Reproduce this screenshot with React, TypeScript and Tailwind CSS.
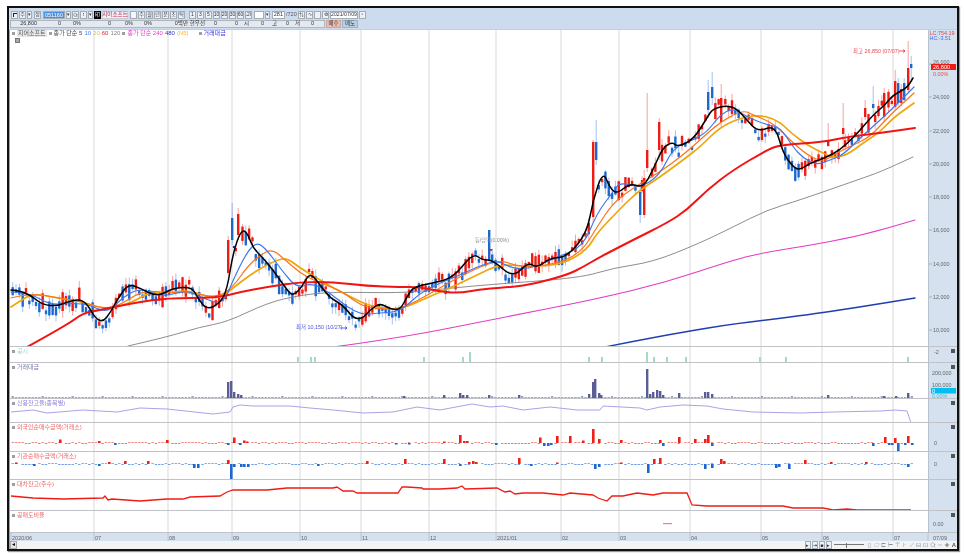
import { Minus, Plus, Search } from "lucide-react";
import type { ReactNode } from "react";

type Pt = [number, number];
// [x, body top, body bottom, wick top, wick bottom, up]
type Candle = [number, number, number, number, number, boolean];

const GRID = [94, 168, 232, 300, 361, 429, 496, 561, 619, 690, 761, 822, 893];
const MONTHS: [number, string][] = [
  [11, "2020/06"], [94, "07"], [168, "08"], [232, "09"], [300, "10"], [361, "11"], [429, "12"],
  [496, "2021/01"], [561, "02"], [619, "03"], [690, "04"], [761, "05"], [822, "06"], [893, "07"],
];

const BLACK: Pt[] = [
  [11, 290], [20, 291], [30, 295], [43, 305], [57, 306], [67, 302], [80, 299], [88, 305], [95, 318], [103, 322],
  [110, 313], [117, 300], [128, 284], [140, 288], [157, 297], [173, 288], [192, 287], [197, 297], [207, 310], [220, 303],
  [227, 290], [233, 253], [241, 230], [247, 232], [253, 248], [263, 258], [273, 270], [287, 290], [293, 296], [302, 287],
  [310, 272], [320, 285], [330, 298], [343, 305], [353, 318], [362, 319], [370, 310], [380, 303], [390, 309], [400, 310],
  [407, 297], [413, 287], [433, 283], [453, 278], [473, 253], [482, 260], [493, 260], [513, 278], [528, 262], [537, 268],
  [550, 258], [567, 257], [587, 233], [593, 200], [603, 171], [610, 188], [617, 194], [630, 183], [643, 188], [653, 170],
  [663, 147], [673, 142], [677, 147], [693, 140], [707, 118], [713, 108], [733, 105], [747, 120], [758, 132], [775, 125],
  [783, 153], [793, 167], [800, 170], [810, 163], [825, 158], [840, 150], [855, 136], [873, 115], [885, 105], [893, 95], [907, 88], [913, 78],
];
const BLUE: Pt[] = [
  [11, 292], [30, 293], [50, 305], [73, 303], [90, 305], [107, 313], [123, 297], [140, 288], [163, 297], [187, 290],
  [200, 297], [223, 305], [233, 280], [247, 252], [257, 242], [267, 250], [283, 272], [297, 288], [313, 283], [330, 293],
  [347, 307], [363, 315], [377, 313], [400, 312], [420, 293], [440, 283], [460, 275], [477, 267], [497, 260], [513, 269],
  [533, 268], [557, 257], [583, 247], [597, 213], [613, 192], [620, 182], [640, 188], [660, 175], [673, 148], [693, 140],
  [707, 132], [720, 115], [733, 108], [747, 117], [767, 125], [780, 127], [793, 147], [803, 158], [817, 165], [830, 160],
  [843, 155], [860, 138], [877, 123], [893, 108], [914, 87],
];
const ORANGE: Pt[] = [
  [11, 298], [30, 293], [60, 298], [87, 303], [100, 308], [117, 307], [143, 290], [167, 293], [190, 292], [217, 298],
  [233, 287], [247, 267], [260, 255], [272, 249], [283, 258], [300, 273], [317, 282], [340, 290], [353, 300], [367, 308],
  [400, 310], [433, 292], [450, 282], [477, 268], [500, 260], [517, 266], [533, 267], [563, 262], [583, 250], [597, 227],
  [613, 203], [633, 188], [660, 172], [683, 155], [700, 140], [720, 122], [743, 110], [753, 115], [773, 123], [790, 140],
  [807, 155], [823, 162], [833, 155], [853, 145], [870, 137], [890, 115], [914, 93],
];
const AMBER: Pt[] = [
  [11, 307], [20, 301], [30, 295], [43, 295], [57, 298], [83, 302], [97, 307], [110, 309], [133, 302], [150, 292],
  [167, 293], [190, 290], [207, 297], [220, 298], [233, 288], [250, 275], [263, 267], [277, 260], [287, 258], [300, 268],
  [317, 278], [333, 288], [353, 298], [367, 305], [383, 308], [400, 310], [433, 295], [450, 288], [477, 275], [500, 264],
  [533, 267], [563, 264], [587, 250], [597, 233], [617, 212], [637, 192], [660, 177], [683, 160], [700, 147], [720, 127],
  [743, 117], [763, 115], [780, 122], [790, 132], [807, 145], [823, 153], [833, 158], [847, 155], [863, 143], [880, 132],
  [893, 118], [914, 103],
];
const RED: Pt[] = [
  [27, 347], [67, 325], [83, 313], [100, 310], [133, 303], [167, 298], [217, 298], [240, 292], [267, 287], [300, 282],
  [333, 282], [367, 286], [400, 287], [420, 287], [443, 292], [460, 293], [483, 289], [513, 287], [533, 284], [567, 275],
  [583, 267], [600, 257], [633, 240], [667, 223], [687, 210], [707, 190], [733, 170], [767, 150], [780, 145], [823, 142],
  [847, 137], [880, 133], [915, 128],
];
const GREY: Pt[] = [
  [128, 346], [167, 337], [200, 327], [227, 322], [267, 303], [300, 295], [333, 292], [400, 293], [433, 290], [483, 285],
  [580, 278], [613, 268], [653, 262], [700, 243], [733, 227], [767, 210], [800, 200], [860, 179], [880, 172], [913, 157],
];
const PINK: Pt[] = [[333, 347], [400, 338], [500, 318], [597, 299], [667, 282], [733, 260], [767, 252], [800, 247], [860, 236], [915, 220]];
const NAVY: Pt[] = [[605, 347], [700, 328], [800, 316], [860, 307], [915, 298]];
const CREDIT: Pt[] = [
  [11, 412], [33, 410], [47, 413], [83, 410], [117, 412], [140, 408], [167, 409], [213, 414], [230, 412], [233, 407],
  [240, 405], [253, 406], [290, 406], [310, 408], [333, 410], [363, 413], [393, 412], [417, 407], [440, 410], [472, 404],
  [490, 407], [503, 406], [523, 410], [550, 407], [577, 410], [600, 410], [603, 406], [640, 408], [647, 410], [660, 407],
  [683, 405], [707, 406], [723, 409], [753, 412], [800, 413], [833, 412], [880, 411], [895, 410], [907, 411], [911, 423],
];
const LOAN: Pt[] = [
  [11, 496], [33, 498], [63, 499], [103, 498], [105, 496], [108, 500], [112, 499], [140, 501], [167, 499], [183, 499],
  [190, 497], [220, 496], [227, 492], [233, 490], [267, 490], [287, 488], [333, 488], [337, 487], [343, 491], [353, 491],
  [357, 493], [398, 493], [402, 487], [407, 487], [422, 488], [423, 489], [440, 489], [457, 488], [462, 486], [465, 489],
  [497, 488], [505, 492], [510, 491], [515, 494], [523, 493], [543, 493], [563, 495], [570, 493], [593, 495], [598, 498],
  [607, 501], [612, 496], [623, 496], [637, 493], [653, 495], [663, 493], [687, 493], [692, 505], [707, 506], [783, 506],
  [793, 508], [823, 508], [833, 510], [847, 509], [857, 510], [911, 510],
];

const CANDLES: Candle[] = [
  [227, 240, 273, 236, 275, true], [231, 218, 240, 203, 245, false], [237, 214, 235, 208, 240, true],
  [488, 230, 260, 230, 262, false], [592, 142, 217, 140, 222, true], [595, 142, 160, 120, 165, false],
  [639, 192, 215, 185, 223, false], [643, 178, 215, 170, 218, true], [646, 150, 168, 93, 172, true],
  [658, 122, 150, 118, 160, true], [707, 92, 110, 80, 118, false], [711, 87, 98, 72, 105, false],
  [720, 98, 122, 84, 128, true], [864, 108, 117, 100, 120, true], [872, 104, 108, 86, 115, false],
  [883, 93, 117, 88, 122, true], [894, 81, 107, 70, 110, true], [897, 83, 103, 78, 106, false],
  [900, 89, 103, 84, 106, true], [903, 83, 100, 78, 102, false], [907, 68, 90, 41, 92, true],
  [910, 64, 68, 56, 80, false], [842, 128, 134, 103, 150, true], [827, 140, 146, 123, 147, true],
];

const NOTICES: [number, number][] = [
  [297, 5], [310, 5], [314, 5], [423, 5], [462, 5], [469, 10], [588, 5], [601, 5], [646, 10], [653, 5], [666, 5],
  [685, 5], [759, 5], [785, 5], [907, 5],
];
const VOLUMES: Pt[] = [
  [227, 382], [230, 381], [233, 392], [237, 394], [240, 395], [403, 396], [443, 395], [459, 393], [462, 395], [466, 395],
  [488, 395], [518, 395], [592, 382], [594, 379], [588, 394], [598, 393], [600, 395], [646, 369], [649, 394], [652, 392],
  [656, 390], [659, 391], [662, 395], [678, 393], [704, 392], [707, 392], [711, 394], [827, 395], [883, 396], [895, 396], [907, 393],
];
// [x, height], positive rises above the zero line
const FOREIGN: Pt[] = [
  [59, 3.5], [98, 2], [166, 3], [233, 5.5], [243, 2.5], [246, 1.5], [114, -2], [227, -2], [239, -2], [459, 8], [463, 2], [466, 2],
  [539, 5.5], [443, 1.5], [395, -1.5], [408, -1.5], [495, -2], [543, -3], [547, -3], [550, -2], [556, 7], [569, 7], [592, 14],
  [598, 4], [582, 2.5], [678, 6], [694, 4], [704, 4], [707, 8], [659, 3], [620, 3], [662, -3], [711, -3], [884, 6], [894, 5],
  [907, 7], [872, -3], [888, -2], [891, -2], [897, -8], [904, -2], [911, -2],
];
const INSTITUTION: Pt[] = [
  [15, 1.5], [108, 2], [124, 3], [147, 3], [227, 4], [366, 3], [404, 5], [443, 5], [518, 6], [468, 2], [472, 3], [475, 2], [653, 5],
  [659, 6], [720, 5], [723, 3], [620, 1.5], [556, 1.5], [804, 4], [830, 2], [865, 2], [230, -15], [193, -4], [197, -4], [233, -3],
  [240, -3], [243, -3], [247, -3], [33, -2], [98, -2], [317, -2], [459, -2], [530, -2], [594, -5], [598, -3], [647, -9], [704, -5],
  [711, -4], [775, -4], [778, -3], [788, -5], [907, -3],
];

function yAt(pts: Pt[], x: number) {
  if (x <= pts[0][0]) return pts[0][1];
  for (let i = 1; i < pts.length; i++) {
    if (x <= pts[i][0]) {
      const [x0, y0] = pts[i - 1];
      const [x1, y1] = pts[i];
      return y0 + ((y1 - y0) * (x - x0)) / (x1 - x0);
    }
  }
  return pts[pts.length - 1][1];
}

function rng(seed: number) {
  let s = seed;
  return () => {
    s = (s * 1664525 + 1013904223) % 4294967296;
    return s / 4294967296;
  };
}

function makeCandles(): Candle[] {
  const r = rng(77);
  const out: Candle[] = [];
  for (let x = 11.5; x < 912; x += 3.33) {
    if (CANDLES.some((c) => Math.abs(c[0] - x) < 1.7)) continue;
    const rising = yAt(BLACK, x + 3) < yAt(BLACK, x - 3);
    const up = r() < 0.22 ? !rising : rising;
    const c = yAt(BLACK, x) + (r() - 0.45) * 10 + (up ? -1 : 3);
    const half = 1.5 + r() * r() * 9;
    out.push([x, c - half, c + half, c - half - r() * 7, c + half + r() * 7, up]);
  }
  return [...out, ...CANDLES];
}

const candles = makeCandles();

const toPoints = (pts: Pt[]) => pts.map(([x, y]) => `${x},${y.toFixed(1)}`).join(" ");

// rounds the corners of a hand-read line: quadratic through segment midpoints
function smooth(pts: Pt[]) {
  let d = `M${pts[0][0]} ${pts[0][1]}`;
  for (let i = 1; i < pts.length - 1; i++) {
    const mx = (pts[i][0] + pts[i + 1][0]) / 2;
    const my = (pts[i][1] + pts[i + 1][1]) / 2;
    d += `Q${pts[i][0]} ${pts[i][1]} ${mx} ${my}`;
  }
  const last = pts[pts.length - 1];
  return `${d}L${last[0]} ${last[1]}`;
}

function Grid({ top, h }: { top: number; h: number }) {
  return (
    <>
      {GRID.map((x) => (
        <line key={x} x1={x} x2={x} y1={top} y2={top + h} stroke="#e0e0e0" strokeWidth={1.2} />
      ))}
    </>
  );
}

function PanelLabel({ children, color }: { children: ReactNode; color: string }) {
  return (
    <div className={`absolute left-[2px] top-[1px] flex items-center gap-[2px] text-[6px] leading-[7px] ${color}`}>
      <span className="h-[3px] w-[3px] bg-[#9aa0a8]" />
      {children}
    </div>
  );
}

function AxisText({ y, x = 3, children, fill = "#666" }: { y: number; x?: number; children: ReactNode; fill?: string }) {
  return (
    <text x={x} y={y} fontSize={5.4} fill={fill}>
      {children}
    </text>
  );
}

// one chart pane: plot on the left, value axis on the right
function Pane({
  top,
  h,
  label,
  axis,
  children,
  handle = true,
}: {
  top: number;
  h: number;
  label?: ReactNode;
  axis?: ReactNode;
  children?: ReactNode;
  handle?: boolean;
}) {
  return (
    <div className="flex border-b border-[#bfc3c7]" style={{ height: h }}>
      <div className="relative w-[918px] bg-white">
        <svg className="block h-full w-full" viewBox={`10 ${top} 918 ${h - 1}`}>
          <Grid top={top} h={h} />
          {children}
        </svg>
        {label}
      </div>
      <div className="w-[29px] border-l border-[#b7c2cf] bg-[#d5e1ef]">
        <svg className="block h-full w-full" viewBox={`0 ${top} 28 ${h - 1}`}>
          {handle && <rect x={22} y={top + 2} width={4} height={4} fill="#555" />}
          {axis}
        </svg>
      </div>
    </div>
  );
}

function Bars({ data, base }: { data: Pt[]; base: number }) {
  const r = rng(base);
  const taken = new Set(data.map(([x]) => Math.round(x / 3.33)));
  const ticks: Pt[] = [];
  for (let x = 11.5; x < 912; x += 3.33) {
    if (!taken.has(Math.round(x / 3.33))) ticks.push([x, r() < 0.5 ? 1 : -1]);
  }
  return (
    <>
      {ticks.map(([x, v]) => (
        <rect key={x} x={x} y={v > 0 ? base - v : base} width={2.4} height={1} fill={v > 0 ? "#f48a84" : "#6f9fe8"} />
      ))}
      {data.map(([x, v]) => (
        <rect key={x} x={x} y={v > 0 ? base - v : base} width={2.6} height={Math.abs(v)} fill={v > 0 ? "#ee2018" : "#1f66d0"} />
      ))}
    </>
  );
}

function MainChart() {
  return (
    <>
      {candles.map(([x, t, b, wt, wb, up], i) => (
        <g key={i} fill={up ? "#ee1c14" : "#1d68cf"}>
          <rect x={x + 0.7} y={wt} width={1} height={wb - wt} opacity={0.4} />
          <rect x={x} y={t} width={2.4} height={Math.max(b - t, 1)} />
        </g>
      ))}
      <g fill="none" strokeLinejoin="round" strokeLinecap="round">
        <path d={smooth(NAVY)} stroke="#1f3fb0" strokeWidth={1.4} />
        <path d={smooth(PINK)} stroke="#e23cc4" strokeWidth={1.1} />
        <path d={smooth(GREY)} stroke="#808080" strokeWidth={0.9} />
        <path d={smooth(AMBER)} stroke="#f0a50a" strokeWidth={1.7} />
        <path d={smooth(ORANGE)} stroke="#f9751a" strokeWidth={1.2} />
        <path d={smooth(BLUE)} stroke="#3f78ee" strokeWidth={1.2} />
        <path d={smooth(RED)} stroke="#f01414" strokeWidth={2} />
        <path d={smooth(BLACK)} stroke="#000" strokeWidth={1.5} />
      </g>
      <text x={853} y={53} fontSize={5.4} fill="#ee4a5a">최고 26,850 (07/07)</text>
      <path d="M899 51h6M903 49.5l2 1.5-2 1.5" fill="none" stroke="#e81818" strokeWidth={0.7} />
      <text x={296} y={329} fontSize={5.4} fill="#4a55e0">최저 10,150 (10/27)</text>
      <path d="M340 328h7M345 326.5l2 1.5-2 1.5" fill="none" stroke="#2030e0" strokeWidth={0.7} />
      <text x={475} y={242} fontSize={5.2} fill="#8a8a8a">등/답락(0.00%)</text>
      <path d="M489 249h4l-2 2.5z" fill="#e81818" />
      <circle cx={234} cy={247} r={1.3} fill="#1020d0" />
    </>
  );
}

function Tool({ children, w = "w-[7px]", className = "" }: { children?: ReactNode; w?: string; className?: string }) {
  return (
    <span className={`flex h-[8px] ${w} shrink-0 items-center justify-center overflow-hidden whitespace-nowrap border border-[#a3adb8] bg-[#eef2f7] text-[5px] leading-none text-[#333] ${className}`}>
      {children}
    </span>
  );
}

function Caret() {
  return <Tool w="w-[5px]">▾</Tool>;
}

function Toolbar() {
  return (
    <div className="h-[22px] border-b border-[#c9ccd0] bg-[#ccdcee]">
      <div className="flex h-[11px] items-center gap-[1px] pl-[2px] pt-[2px]">
        <Tool className="border-[#555]">
          <span className="h-[4px] w-[4px] border-l border-t border-[#222]" />
        </Tool>
        <Tool>주</Tool>
        <Caret />
        <Tool className="ml-[1px]">정</Tool>
        <span className="ml-[1px] flex h-[8px] w-[22px] items-center border border-[#a3adb8] bg-white">
          <span className="bg-[#4f90dc] px-[1px] text-[5.5px] leading-[6px] text-white">051160</span>
        </span>
        <Caret />
        <Tool>
          <Search size={6} strokeWidth={2} />
        </Tool>
        <Tool>↕</Tool>
        <Caret />
        <span className="flex h-[8px] w-[7px] items-center justify-center bg-black text-[5px] text-white">印</span>
        <span className="flex h-[8px] w-[26px] items-center justify-center whitespace-nowrap border border-[#c9cdd2] bg-[#f0f2f5] text-[5.6px] leading-none text-[#c0285c]">지어소프트</span>
        <Tool className="ml-[1px] bg-[#4f90dc] text-white">일</Tool>
        {["주", "월", "년", "분", "초", "틱"].map((t) => (
          <Tool key={t}>{t}</Tool>
        ))}
        <span className="w-[2px]" />
        {["1", "3", "5", "10", "20", "30", "60", "120"].map((t) => (
          <Tool key={t} className="text-[#9aa3ad]">{t}</Tool>
        ))}
        <span className="ml-[1px] h-[8px] w-[10px] border border-[#a3adb8] bg-white" />
        <Caret />
        <span className="ml-[1px] flex h-[8px] w-[13px] items-center justify-end border border-[#a3adb8] bg-white pr-[1px] text-[5.5px] leading-none text-[#333]">281</span>
        <span className="w-[11px] text-[5.5px] leading-none text-[#555]">/720</span>
        <Tool>⇅</Tool>
        <Tool>∿</Tool>
        <Tool className="bg-[#7a828c]" />
        <Tool>⚙</Tool>
        <span className="flex h-[8px] w-[28px] items-center justify-center whitespace-nowrap border border-[#a3adb8] bg-white text-[5.2px] leading-none text-[#333]">2021/07/09</span>
        <Tool>▫</Tool>
      </div>
      <div className="flex h-[10px] items-center pl-[1px]">
        <div className="flex h-[8px] w-[315px] items-center border border-[#aeb7c1] bg-[#e4e9f0] text-[5.5px] leading-none text-[#333]">
          <span className="w-[26px] text-right">26,800</span>
          <span className="w-[24px] text-right">0</span>
          <span className="w-[20px] text-right">0%</span>
          <span className="w-[30px] text-right">0</span>
          <span className="w-[22px] text-right">0%</span>
          <span className="w-[19px] text-right">0%</span>
          <span className="w-[36px] text-right">0백만</span>
          <span className="w-[17px] whitespace-nowrap text-right">현우선</span>
          <span className="w-[12px] text-right">0</span>
          <span className="w-[21px] text-right">0</span>
          <span className="w-[11px] text-right">시</span>
          <span className="w-[15px] text-right">0</span>
          <span className="w-[13px] text-right">고</span>
          <span className="w-[12px] text-right">0</span>
          <span className="w-[11px] text-right">저</span>
          <span className="w-[14px] text-right">0</span>
        </div>
        <span className="ml-[1px] flex h-[8px] w-[15px] items-center justify-center border border-[#c9a79e] bg-[#ecbcb0] text-[5.5px] leading-none text-[#333]">매수</span>
        <span className="ml-[1px] flex h-[8px] w-[16px] items-center justify-center border border-[#9cb3c9] bg-[#b9cfe3] text-[5.5px] leading-none text-[#333]">매도</span>
      </div>
    </div>
  );
}

function Legend() {
  return (
    <div className="absolute left-[2px] top-0 text-[6px] leading-[7px]">
      <div className="flex items-center gap-[2px] whitespace-nowrap text-[#444]">
        <span className="h-[3px] w-[3px] bg-[#9aa0a8]" />
        <span className="bg-[#e8e8e8] px-[1px] text-[#555]">지어소프트</span>
        <span className="h-[3px] w-[3px] bg-[#9aa0a8]" />
        <span>종가 단순 5</span>
        <span className="text-[#4c7ff0]">10</span>
        <span className="text-[#f2b63c]">20</span>
        <span className="text-[#ee2020]">60</span>
        <span className="text-[#888]">120</span>
        <span className="h-[3px] w-[3px] bg-[#9aa0a8]" />
        <span className="text-[#e040c0]">종가 단순 240</span>
        <span className="text-[#3030c0]">480</span>
        <span className="text-[#f2b63c]">(N5)</span>
        <span className="ml-[8px] h-[3px] w-[3px] bg-[#9aa0a8]" />
        <span className="text-[#3838e0]">거래대금</span>
      </div>
      <div className="ml-[3px] mt-[1px] h-[5px] w-[5px] border border-[#777] bg-[#aaa]" />
    </div>
  );
}

function ScrollBar() {
  const icons = ["▯", "▱", "⊏", "⊢", "⊤", "⊦", "⟋", "⊟", "⊡"];
  return (
    <div className="flex h-[8px] items-center bg-[#f1f3f5] text-[5.5px] leading-none text-[#555]">
      <span className="flex h-[8px] w-[7px] items-center justify-center border border-[#aaa] bg-[#e4e4e4] text-[#111]">◂</span>
      <span className="flex-1" />
      <div className="flex h-[8px] items-center gap-[1px] text-[#222]">
        <Tool w="w-[6px]">▸</Tool>
        <Tool w="w-[6px]">⇥</Tool>
        <Tool w="w-[6px]">■</Tool>
        <Tool w="w-[6px]">▸</Tool>
      </div>
      <div className="ml-[2px] flex w-[30px] items-center">
        <span className="h-[3px] w-[12px] border-t border-[#777]" />
        <span className="h-[5px] w-[1px] bg-[#777]" />
        <span className="h-[3px] w-[17px] border-t border-[#777]" />
      </div>
      <div className="ml-[3px] flex items-center gap-[1px] text-[#8a8f96]">
        {icons.map((t, i) => (
          <span key={i} className="w-[6px] text-center text-[6px]">{t}</span>
        ))}
        <Search size={6} />
        <Minus size={6} />
        <Plus size={6} strokeWidth={3} className="text-[#555]" />
        <span className="ml-[1px] mr-[1px] text-[6px] font-bold text-[#555]">A</span>
      </div>
    </div>
  );
}

export default function App() {
  return (
    <div className="h-[558px] w-[966px] overflow-hidden bg-white pl-[7px] pt-[6px] font-['Liberation_Sans','Noto_Sans_CJK_KR',sans-serif] blur-[0.35px]">
      <div className="h-[545px] w-[952px] border-2 border-[#111] bg-[#ccdcee] shadow-[1px_1px_1px_#999]">
        <Toolbar />
        <div className="border-l border-[#9da3aa]">
          <Pane
            top={30}
            h={317}
            handle={false}
            label={<Legend />}
            axis={
              <>
                <AxisText x={0.5} y={34.5} fill="#e04040">LC:754.19</AxisText>
                <AxisText x={0.5} y={40} fill="#3c70e0">HC:-3.51</AxisText>
                {[[26, 64], [24, 97], [22, 131], [20, 164], [18, 197], [16, 230], [14, 264], [12, 297], [10, 330]].map(([v, y]) => (
                  <g key={v}>
                    <line x1={0} x2={3} y1={y} y2={y} stroke="#8a929c" strokeWidth={0.6} />
                    <AxisText x={4} y={v === 26 ? 63.5 : y + 2}>{v},000</AxisText>
                  </g>
                ))}
                <rect x={2} y={64} width={25} height={6} fill="#ee1c14" />
                <text x={4} y={69.2} fontSize={5.6} fill="#fff">26,800</text>
                <AxisText x={4} y={75.5} fill="#ee4a4a">0.00%</AxisText>
              </>
            }
          >
            <MainChart />
          </Pane>
          <Pane
            top={347}
            h={16}
            label={<PanelLabel color="text-[#9fd8c0]">공시</PanelLabel>}
            axis={<AxisText x={5} y={354}>-2</AxisText>}
          >
            {NOTICES.map(([x, v]) => (
              <rect key={x} x={x} y={362 - v} width={2} height={v} fill="#a3dcc4" />
            ))}
          </Pane>
          <Pane
            top={363}
            h={36}
            label={<PanelLabel color="text-[#7c7ca8]">거래대금</PanelLabel>}
            axis={
              <>
                <AxisText y={375}>200,000</AxisText>
                <AxisText y={387}>100,000</AxisText>
                <rect x={2} y={388} width={25} height={5.5} fill="#00bdf2" />
                <text x={3} y={393} fontSize={5.6} fill="#fff">0</text>
                <AxisText y={398} fill="#35bde8">0.00%</AxisText>
              </>
            }
          >
            {Array.from({ length: 271 }, (_, i) => 11.5 + i * 3.33).map((x, i) => (
              <rect key={x} x={x} y={i % 9 === 0 ? 396 : 397} width={2.4} height={i % 9 === 0 ? 2 : 1} fill="#a4a4c4" />
            ))}
            {VOLUMES.map(([x, y]) => (
              <rect key={x} x={x} y={y} width={2.4} height={398 - y} fill="#5c5c96" />
            ))}
          </Pane>
          <Pane top={399} h={24} label={<PanelLabel color="text-[#8f82dc]">신용잔고율(종목별)</PanelLabel>}>
            <polyline points={toPoints(CREDIT)} fill="none" stroke="#a396e2" strokeWidth={0.9} />
          </Pane>
          <Pane
            top={423}
            h={29}
            label={<PanelLabel color="text-[#ee6a6a]">외국인순매수금액(거래소)</PanelLabel>}
            axis={<AxisText x={5} y={445}>0</AxisText>}
          >
            <Bars data={FOREIGN} base={443} />
          </Pane>
          <Pane
            top={452}
            h={28}
            label={<PanelLabel color="text-[#ee6a6a]">기관순매수금액(거래소)</PanelLabel>}
            axis={<AxisText x={5} y={466}>0</AxisText>}
          >
            <Bars data={INSTITUTION} base={464} />
          </Pane>
          <Pane top={480} h={31} label={<PanelLabel color="text-[#ee6a6a]">대차잔고(주수)</PanelLabel>}>
            <polyline points={toPoints(LOAN)} fill="none" stroke="#ee1c14" strokeWidth={1.3} />
          </Pane>
          <Pane
            top={511}
            h={22}
            label={<PanelLabel color="text-[#ee6a6a]">공매도비율</PanelLabel>}
            axis={<AxisText x={4} y={526}>0.00</AxisText>}
          >
            <rect x={663} y={523} width={9} height={1.2} fill="#f08080" />
          </Pane>
          <div className="h-[8px] bg-[#d5e1ef]">
            <svg className="block h-full w-full" viewBox="10 533 947 8">
              {MONTHS.map(([x, t]) => (
                <g key={x}>
                  <line x1={x} x2={x} y1={533} y2={541} stroke="#b5bcc4" strokeWidth={0.8} />
                  <text x={x + 1} y={539.5} fontSize={5.6} fill="#666">{t}</text>
                </g>
              ))}
              <line x1={928} x2={928} y1={533} y2={541} stroke="#b5bcc4" strokeWidth={0.8} />
              <text x={933} y={539.5} fontSize={5.6} fill="#666">07/09</text>
            </svg>
          </div>
          <ScrollBar />
        </div>
      </div>
    </div>
  );
}
